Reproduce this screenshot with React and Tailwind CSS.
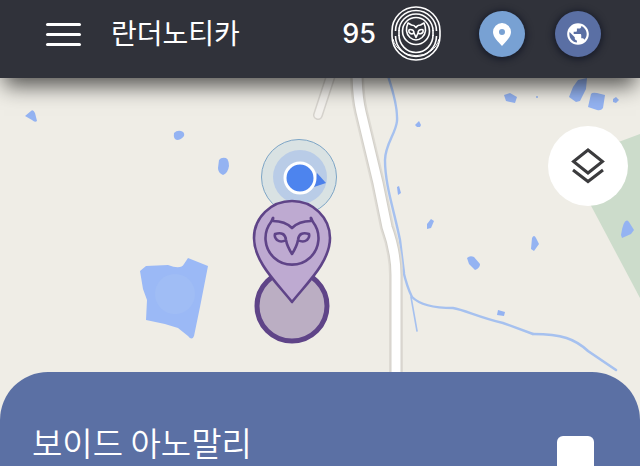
import { useState } from 'react';
import { MdPublic } from 'react-icons/md';

const ponds = [
  'M25 116 L31 111 Q33 109 35 113 L37 121 Q35 123 32 120 Z',
  'M174 133 Q177 130 181 131 Q185 132 184 136 Q181 140 177 140 Q173 139 174 133 Z',
  'M219 160 Q221 157 226 158 Q229 160 229 166 Q228 173 223 175 Q218 173 218 168 Z',
  'M504 95 L510 93 L517 97 L515 103 L506 101 Z',
  'M415 125 L419 121 L421 125 L420 127 L417 127 Z',
  'M397 187 L399 186 L401 193 L398 195 Z',
  'M427 224 L431 219 L434 221 L431 228 L427 229 Z',
  'M467 258 Q470 255 474 257 L480 264 Q480 268 475 270 L469 264 Z',
  'M532 238 Q534 234 536 238 L539 244 L534 251 L531 249 Z',
  'M498 310 L505 312 L504 316 L497 315 Z',
  'M573 87 L578 80 L587 78 L586 89 L580 101 L576 102 L569 97 Z',
  'M591 94 Q592 92 597 93 L605 95 L603 108 Q601 111 597 110 L588 107 Z',
  'M613 99 L616 97 L619 100 L616 103 L613 102 Z',
  'M621 235 Q624 216 629 222 L634 230 L631 234 L622 238 Z',
];

function OwlLogo() {
  return (
    <svg
      viewBox="0 0 50 56"
      className="h-14 w-[50px] text-white"
      fill="none"
      stroke="currentColor"
      strokeWidth="1.6"
      strokeLinejoin="round"
      aria-hidden="true"
    >
      <circle cx="25" cy="25" r="13.5" />
      <path d="M1 25 A24 24 0 0 1 49 25 V30 A24 24 0 0 1 1 30 Z" />
      <path d="M4.5 25 A20.5 20.5 0 0 1 45.5 25" />
      <path d="M8 25 A17 17 0 0 1 42 25" />
      <path d="M2 33 A23.5 21 0 0 0 48 33" strokeWidth="1" />
      <path d="M4.5 30 A20.5 20.5 0 0 0 45.5 30" />
      <path d="M8 29 A17 17.5 0 0 0 42 29" />
      <path d="M8 24 V30 M42 24 V30" />
      <path d="M17 17 L20.5 19 Q23.5 19 25 21.5 Q26.5 19 29.5 19 L33 17 Q37 26 31 31.5 Q25 36.5 19 31.5 Q13 26 17 17 Z" />
      <path d="M23 27 Q20 29 18 26 Q17.500 23.500 19 23.500 Q23 23.500 23 27 L25 31.500 L27 27 Q27 23.500 31 23.500 Q32.500 23.500 32 26 Q30 29 27 27" />
    </svg>
  );
}

function PinIcon() {
  return (
    <svg viewBox="0 0 18 23" className="h-[23px] w-[18px]" aria-hidden="true">
      <path
        fill="currentColor"
        fillRule="evenodd"
        d="M9 0 A9 9 0 0 1 18 9 C18 14 13 18.500 9 23 C5 18.500 0 14 0 9 A9 9 0 0 1 9 0 Z M9 6 A3 3 0 1 0 9 12 A3 3 0 1 0 9 6 Z"
      />
    </svg>
  );
}

function Header() {
  return (
    <header className="relative z-10 flex h-[78px] items-start bg-[#30323a] pr-[39px] pl-[46px] shadow-[0_12px_20px_-4px_rgba(0,0,0,0.65)]">
      <button type="button" aria-label="메뉴" className="mt-[23px] flex w-[35px] flex-col gap-[7px]">
        <span className="h-[3px] w-full rounded-full bg-white" />
        <span className="h-[3px] w-full rounded-full bg-white" />
        <span className="h-[3px] w-full rounded-full bg-white" />
      </button>
      <h1 className="ml-[30px] flex h-16 items-center font-['Noto_Sans_CJK_KR',sans-serif] text-[28px] text-white">
        란더노티카
      </h1>
      <div className="ml-auto flex h-[68px] items-center">
        <span className="font-['Inter',sans-serif] text-[27px] font-medium text-white">95</span>
        <span className="ml-[15px]">
          <OwlLogo />
        </span>
        <button
          type="button"
          aria-label="위치"
          className="ml-[38px] flex size-[46px] items-center justify-center rounded-full bg-[#78a1d3] text-white shadow-[0_1px_6px_2px_rgba(15,20,35,0.7)]"
        >
          <PinIcon />
        </button>
        <button
          type="button"
          aria-label="세계"
          className="ml-[30px] flex size-[46px] items-center justify-center rounded-full bg-[#5a6fa4] text-white shadow-[0_1px_6px_2px_rgba(15,20,35,0.7)]"
        >
          <MdPublic className="size-[26px]" />
        </button>
      </div>
    </header>
  );
}

function OwlMarker() {
  return (
    <g stroke="#5f4488" strokeWidth="2.6" strokeLinejoin="round" strokeLinecap="round" fill="none">
      <circle cx="292" cy="306" r="35" fill="#bbaec3" strokeWidth="5" />
      <path d="M292 302 C277 283 254 262 254 238 A38 37 0 0 1 330 238 C330 262 307 283 292 302 Z" fill="#beaad1" />
      <path d="M273 218 L271 222 A26.5 26.5 0 1 0 313 222 L311 218" />
      <path d="M273 218 L273 221 Q285 221 292 228 Q299 221 311 221 L311 218" />
      <path d="M286 240 Q281 243 277 240 Q274 237 275 234 Q285 231 286 240 Q287 246 292 254 Q297 246 298 240 Q299 231 309 234 Q310 237 307 240 Q303 243 298 240" />
    </g>
  );
}

function MapDrawing() {
  const road = 'M357 70 Q357 95 361 112 L378 183 L387 227 Q396 252 396 275 V430';
  const sideRoad = 'M332 72 L318 115';

  return (
    <svg
      viewBox="0 78 640 342"
      preserveAspectRatio="xMidYMid slice"
      className="absolute inset-0 size-full"
      aria-hidden="true"
    >
      <path d="M570 160 L640 134 V298 L588 200 Z" fill="#ccdccb" />

      <g fill="none" stroke="#a6c1ef" strokeLinecap="round">
        <path d="M388 76 Q398 106 397 121 C396 133 385 145 385 160 C385 185 394 210 400 240 L404 273" strokeWidth="2.4" />
        <path d="M403 270 Q407 287 412 297 C421 306 440 308 453 308 C465 310 478 317 503 323 L533 334" strokeWidth="2.4" />
        <path d="M533 334 C562 334 575 339 588 351 L616 370" strokeWidth="2.6" />
        <path d="M411 297 L417 331" strokeWidth="1.6" />
      </g>

      <path d={sideRoad} fill="none" stroke="#d6d3cd" strokeWidth="10" strokeLinecap="round" />
      <path d={sideRoad} fill="none" stroke="#f3f1ed" strokeWidth="7" strokeLinecap="round" />
      <path d={road} fill="none" stroke="#dedbd4" strokeWidth="14" />
      <path d={road} fill="none" stroke="#d3d0c9" strokeWidth="11" />
      <path d={road} fill="none" stroke="#ffffff" strokeWidth="9" />

      <g fill="#94b3f2">
        {ponds.map((d) => (
          <path key={d} d={d} />
        ))}
        <circle cx="537" cy="97" r="1" />
      </g>

      <path
        d="M140 271 L146 266 L168 265 Q181 270 184 264 L188 258 L208 266 L200 307 L194 336 Q192 341 188 336 L178 328 Q163 323 146 320 L147 300 L143 289 Z"
        fill="#9bb9f6"
      />
      <circle cx="175" cy="294" r="20" fill="#a0bdf5" />

      <circle cx="299" cy="177" r="37.5" fill="#d9e2e3" stroke="#7da5c6" strokeWidth="1" />
      <circle cx="300" cy="177" r="27" fill="#b9cce7" />
      <path d="M317 173 L326 183 L314 187 Z" fill="#4c80ea" />
      <circle cx="300" cy="178" r="15" fill="#4d84ee" stroke="#ffffff" strokeWidth="3" />

      <OwlMarker />
    </svg>
  );
}

function App() {
  const [saved, setSaved] = useState(false);

  return (
    <div className="flex h-screen flex-col overflow-hidden bg-[#efede6]">
      <Header />

      <main className="relative flex-1">
        <MapDrawing />
        <button
          type="button"
          aria-label="지도 레이어"
          className="absolute top-12 right-3 flex size-20 items-center justify-center rounded-full bg-white"
        >
          <svg viewBox="0 0 36 40" className="h-10 w-9" fill="none" stroke="#3b3b3d" strokeWidth="3" aria-hidden="true">
            <path d="M18 4 L32.5 15.500 L18 27 L3.5 15.500 Z" />
            <path d="M3 24 L18 35.5 L33 24" />
          </svg>
        </button>
      </main>

      <section className="relative -mt-12 flex h-[94px] shrink-0 items-start justify-between rounded-t-[48px] bg-[#5b70a4] pr-[46px] pl-8">
        <h2 className="mt-12 font-['Noto_Sans_CJK_KR',sans-serif] text-[33px] leading-[44px] font-[350] text-white">
          보이드 아노말리
        </h2>
        <button
          type="button"
          aria-label="저장"
          aria-pressed={saved}
          onClick={() => setSaved(!saved)}
          className="mt-16 h-[30px] w-[37px] rounded-t-md bg-white"
        />
      </section>
    </div>
  );
}

export default App;
